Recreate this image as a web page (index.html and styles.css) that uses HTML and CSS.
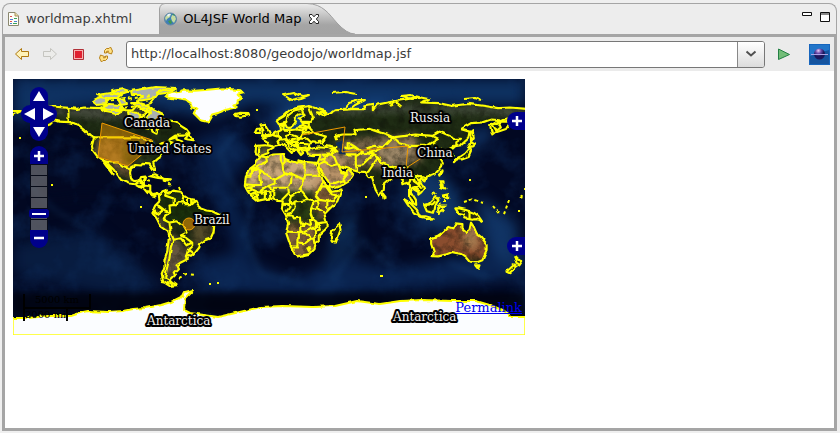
FILE: index.html
```html
<!DOCTYPE html>
<html lang="en">
<head>
<meta charset="utf-8">
<title>OL4JSF World Map</title>
<link rel="stylesheet" href="styles.css">
</head>
<body>
<main class="window">
  <header class="tabbar">
    <div class="tab">
      <svg class="icon" width="16" height="16" viewBox="0 0 16 16" aria-hidden="true">
        <path d="M2.500 1.500H9L12.500 5V14.500H2.500Z" fill="#fffef8" stroke="#8b8870"/>
        <path d="M9 1.500V5H12.500" fill="#eadca8" stroke="#a8925a"/>
        <path d="M4 5.500h2M4 10.500h2" stroke="#e05050"/>
        <path d="M4 8.500h3M8 10.500h3M4 12.500h2" stroke="#4c7fd0"/>
        <path d="M8 7.500h3M7 12.500h4" stroke="#3da55c"/>
      </svg>
      <a href="#source">worldmap.xhtml</a>
    </div>
    <div class="tab tab-active">
      <svg class="tab-shape" width="196" height="31" viewBox="0 0 196 31" aria-hidden="true">
        <defs><linearGradient id="tabfill" x1="0" y1="0" x2="0" y2="1"><stop offset="0" stop-color="#ececec"/><stop offset=".7" stop-color="#a5a5a5"/><stop offset="1" stop-color="#a3a3a3"/></linearGradient></defs>
        <path d="M.5 31V6Q1 1 6 .5H148C164 1 170 11 178 20Q188 31 196 31Z" fill="url(#tabfill)"/>
        <path d="M.5 31V6Q1 1 6 .5H148C164 1 170 11 178 20Q188 31 196 31" fill="none" stroke="#a0a0a0"/>
      </svg>
      <svg class="icon" width="16" height="16" viewBox="0 0 16 16" aria-hidden="true">
        <circle cx="7.500" cy="8" r="6" fill="#3d7eb8" stroke="#6287a5"/>
        <path d="M3 5Q6 2 8 3L7 6L4 8L3 10L2 7ZM9 4L12 5L13 8L11 12L9 10L8 7Z" fill="#c6dca0"/>
        <path d="M5 10L8 9L9 12L7 13ZM9 3L11 3L12 5Z" fill="#3f984d"/>
        <path d="M4 4Q6 2 8 3L5 6Z" fill="#e8f3fc"/>
      </svg>
      <a href="#map" aria-current="page">OL4JSF World Map</a>
      <button class="close" aria-label="Close tab"><svg width="12" height="12" viewBox="0 0 12 12"><path d="M1.500 1.500H4L6 3.800L8 1.500H10.500V3.500L8.300 6L10.500 8.500V10.500H8L6 8.200L4 10.500H1.500V8.500L3.700 6L1.500 3.500Z" fill="#fff" stroke="#222"/></svg></button>
    </div>
    <div class="winctl">
      <button aria-label="Minimize"><svg width="11" height="11" viewBox="0 0 11 11"><path d="M.5 1.500h9v3h-9z" fill="#fff" stroke="#111"/></svg></button>
      <button aria-label="Maximize"><svg width="11" height="11" viewBox="0 0 11 11"><path d="M.5 1.500h9v9h-9zM.5 3h9" fill="#fff" stroke="#111"/></svg></button>
    </div>
  </header>

  <section class="browser">
    <form class="toolbar">
      <button type="button" aria-label="Back"><svg width="16" height="16" viewBox="0 0 16 16"><path d="M1.500 8L7.500 2.500V5.500H14.500V10.500H7.500V13.500Z" fill="#fff3b8" stroke="#b07a10" stroke-linejoin="round"/></svg></button>
      <button type="button" aria-label="Forward" disabled><svg width="16" height="16" viewBox="0 0 16 16"><path d="M14.500 8L8.500 2.500V5.500H1.500V10.500H8.500V13.500Z" fill="#ececea" stroke="#c5c5c0" stroke-linejoin="round"/></svg></button>
      <button type="button" aria-label="Stop"><svg width="16" height="16" viewBox="0 0 16 16"><path d="M3.500 3.500h10v10h-10z" fill="#f8b0b0" stroke="#b03038"/><path d="M5 5h7v7H5z" fill="#e02030"/></svg></button>
      <button type="button" aria-label="Refresh"><svg width="16" height="16" viewBox="0 0 16 16"><g fill="#ffe184" stroke="#b88218" stroke-linejoin="round"><path id="turn" d="M6.500 7V4.500L8.500 2.500H11L12.500 1L14.500 5L13.500 8L9.500 6.500L10.500 5L8.500 5.500V7Z"/><use href="#turn" transform="rotate(180 8 8.500)"/></g></svg></button>
      <div class="combo">
        <input type="text" aria-label="Address" value="http://localhost:8080/geodojo/worldmap.jsf">
        <button type="button" aria-label="Show history"><svg width="12" height="8" viewBox="0 0 12 8"><path d="M1.500 1.500L6 5.500L10.500 1.500" fill="none" stroke="#505050" stroke-width="2"/></svg></button>
      </div>
      <button class="go" aria-label="Go"><svg width="14" height="14" viewBox="0 0 14 14"><path d="M1.500 2L12.500 7.500L1.500 12.500Z" fill="#72bd78" stroke="#238044"/></svg></button>
      <button type="button" class="eclipse" aria-label="Open in external browser"><svg width="21" height="21" viewBox="0 0 21 21"><defs><radialGradient id="orb" cx=".4" cy=".2"><stop offset="0" stop-color="#e5cdf5"/><stop offset=".5" stop-color="#6d4cab"/><stop offset="1" stop-color="#1c165c"/></radialGradient></defs><path d="M0 0H21V21H0Z" fill="#1765bd"/><path d="M1 1H20V20H1Z" fill="#2275c9"/><path d="M1 20V12L20 6V20Z" fill="#15549f"/><circle cx="10.500" cy="10" r="5.500" fill="url(#orb)"/><path d="M2 10.500H19" stroke="#aaa0e4"/></svg></button>
    </form>

    <div class="page">
      <div class="map" id="map">
        <svg class="world" viewBox="0 0 512 256" role="img" aria-label="World map with country borders">
          <defs>
            <path id="land" transform="translate(256 128) scale(1.4222 -1.4222)" d="M-141 69.700L-150 70.500L-157 71.300L-163 69L-166 68.300L-162 66.500L-168 65.700L-161 64.500L-165 62L-162 59L-157 58.800L-162 55.200L-154 58L-151 61L-148 60L-140 59.700L-135 58L-130 54L-127 51L-123 49L-124.500 43L-124 40L-121 36L-118 34L-117 32.500L-114.500 29L-110 23L-112 28L-114.500 31.500L-112 29L-109 26L-105.500 21L-104 19L-98 16.500L-94.500 16L-92 14.500L-88 13L-85.500 10L-83 8.500L-80 7.500L-79 9L-77.500 8L-79 9.500L-82 9L-83.500 11L-83.500 15L-88 15.800L-88 18L-87 21.400L-90 21L-91 18.800L-94 18.200L-97 20L-97.700 24L-97 28L-94 29.500L-90 29.200L-89 30.300L-84 30L-82.700 28L-81 25.200L-80.200 26.500L-81.300 31L-78 34L-75.700 35.500L-76 37.500L-74 40L-70 42L-70 44L-67 45L-64 44L-61 46L-65 47.500L-65 49L-70 47.500L-66 50.200L-60 50.200L-56 52L-58 54.500L-62 57L-65 60L-70 61L-73 62L-78 62.400L-77.500 60L-78.500 58.500L-76.700 57L-79 54.500L-79 51.500L-82 53L-82.500 55.200L-88 56.500L-92.700 58L-94.500 60L-91 63L-87 64.500L-86 67L-82 69L-85 69.800L-90 69L-93 71.500L-96 68L-102 68L-108 68.300L-115 68.300L-115 69.500L-123 69.700L-130 70L-135 69Z
            M-77.500 8L-75 11L-72 12L-71 9.500L-68 11.500L-62 10.700L-60 8L-57 6L-52 5L-50 1L-48 -1L-44 -2.500L-40 -3L-35 -5.500L-35 -8.500L-38.500 -13L-39 -17.500L-41 -22L-45 -23.300L-48.500 -26L-49 -28.500L-53 -33.500L-55 -35L-58 -34L-57 -36.500L-62 -39L-65 -41L-64 -43L-67 -46L-66 -48L-69 -51L-68.500 -52.500L-65 -55L-70 -55.500L-74.500 -52.500L-75.500 -47L-73.500 -42L-73.500 -37L-71.500 -31L-70.200 -20L-71 -17.500L-76 -14L-79 -8L-81.300 -5L-80 -3L-81 -1L-80 1L-77 4Z
            M-6 35.800L-2 35L3 36.900L10 37.300L11 34L15 32.300L20 31L20 32.800L25 31.700L31 31.300L34 31L32.500 29.800L35 25L37 21L38 18L43 12L44 10.500L51 11.800L48 4L42 -2L39 -5L40.500 -11L40.500 -15L35 -20L35 -24L32.700 -26L32 -29L28 -33L20 -34.700L18 -33L15 -27L12 -18L13.500 -12L12 -6L9 -1L9.700 4L6 4.300L1 6L-5 5L-8 4.300L-13 8.500L-15 11L-17 14.700L-16.500 20L-14.500 26L-10 29.500L-9.500 32Z
            M-9.500 38.700L-9 43L-2 43.500L-1.300 46L-4.500 48.300L1.500 50.200L4 52L8.500 54L8 57L10.500 57.500L10 54.500L14 54L19 54.500L21 57L24 57.500L23.500 59.200L29.500 59.800L23 60L21.500 61.500L25.500 65L22 65.800L17.500 62L19 60L16.500 57L14 55.500L12.500 56L11 59L7 58L5 61L10 64L15 68.500L21 70L28 71L33 69.500L41 67L40 66.200L33 66.500L38 64L40 65L44 66.500L46 68L54 68.500L60 69L68 68.800L67 71.500L73 72.500L73 68L76 72L86 74L98 76L104 77.500L113 75.800L107 73.500L120 73L129 71L132 71.500L140 72.500L152 71L161 69.500L170 70L181 69L181 65L177 64.500L179 62.500L170 60L163 60L162 58L163 56L157 51L155.500 57L162 61L156 61.500L150 59.500L142 59L135 54.700L141 53L140 48L135 43.500L131 42.700L127.500 39.500L129.300 36L126.500 34.500L126.500 37.500L125 39.500L121.500 39L122 40.500L118 39L122.300 37L119.300 35L121.500 31.500L121 28L117 23.500L110 21L108 21.500L106 19L109 13L107 10.300L105 8.700L105 10.500L101 13L99.500 11L103.300 5L103.500 1.500L101 3L98.500 8L98.500 15L97 17L94.500 16L94 19L91 22.500L87 21.500L85 19.500L80.300 15.500L80 12L77.500 8L75 12L72.800 19L72.500 21L70 21L67 24.700L62 25L57 26.500L51 28.500L48.500 30L50 27L51.500 25L54 24L56.300 26L59.800 22.500L57.500 19L52 15.500L45 13L43 14L42 17.500L39 21.500L35 28L35 30L34.300 31.300L36 35.500L36 36.700L30.500 36.500L27.500 37L26.500 39.500L29.500 41L35 42L41.300 41.500L37.500 44.700L39 47L35 46.300L36 45L33.500 44.500L32.500 46L30.500 46.200L28.500 43.700L28 41.700L26 40.800L23 40.300L24 38L22.500 36.500L21 38.500L19.500 40.500L19.400 42L14 45L12.300 45.300L14 42.500L18.400 40.100L16.500 39L16 38L12 42L9 44.400L5 43.300L3.200 43L3.200 41.800L0 40L-.5 38L-5.500 36.100L-9 37Z
            M114 -22L114 -26L116 -32L115 -34.500L119 -34.700L124 -33.500L129 -31.700L135 -33L138 -35L141 -38.500L146 -39L150 -37.500L153 -31L153 -26L149 -21L146 -18.500L144 -14L142 -11L141 -16L139 -17.500L136 -15L136 -12L131 -11.500L129 -15L126 -14L122 -18L119 -20ZM145 -41L148 -41L147 -43.500Z
            M49.300 -12L50.300 -16L47 -25L44 -24L43.500 -21.500L44.500 -16.500Z
            M-5 50L1 51L0 53L-2 56L-3 58.500L-6 58L-4 54L-4 52ZM-10 52L-6 52L-6 55L-8.500 55ZM-24 65.500L-20 66.300L-14.500 66L-14 64.700L-20 63.500L-23 64Z
            M130 31.500L132 33.500L136 33.500L140 35L142 39.500L141 41L138 37.500L135 35.500L131 34.200ZM140 42L144 43L145 44L142 45.500ZM142 46L144 49L143 54L142 53ZM120.500 22L122 25L120 24Z
            M131 -1L134 -1L138 -2L144 -4L147 -6L150 -10.500L146 -8.500L143 -9L138 -8L137 -5L133 -4Z
            M109 1.500L112 2L117 7L119 5L117 1L116 -4L111 -3ZM95 5.500L99 3L104 -2L106 -6L102 -4L98 1ZM105.500 -6.500L110 -6.500L115 -8L110 -8.500L106 -7.500ZM119 1L124 1L121 0L123 -3L121 -2L120 -5L119 -3ZM120 18L122 18L122 15L124 13L121 14ZM122 8L126 9L126 6L123 7ZM80 9.500L82 7L80.500 6ZM108.500 19.500L111 20L110 18Z
            M172.500 -34.500L175 -37L178 -38L176 -41L174 -40ZM172 -41L174 -42L169 -46.500L167 -45.500Z
            M-85 22L-80 23L-74.500 20L-78 20.500ZM-74 19.800L-69 19.500L-71 18L-74 18.500ZM-59 48L-56 51.500L-53 47L-57 47.500Z"/>
            <path id="ice" transform="translate(256 128) scale(1.4222 -1.4222)" d="M-73 78.200L-69 80L-63 81L-60 82L-52 81.700L-45 82.300L-32 83.500L-20 82L-18 80L-22 79L-19 76L-22 75L-22 73L-25 72L-22 70.300L-30 68.500L-36 66L-40 65L-43 60L-48 61L-51 64L-53 66L-51 69L-54 70L-55 73L-58 75L-65 76L-71 77Z"/>
            <path id="arctic" d="M79 22L87 18L97 20L92 25L84 26ZM87 29L96 25L107 26L112 31L104 35L93 33ZM84 16L97 14L108 16L104 19L92 19ZM105 20L112 19L114 25L108 26ZM99 12L110 10L116 12L107 15ZM118 12L142 8L164 9L158 13L145 15L138 20L124 22L130 16L119 16ZM118 24L127 24L136 27L142 32L150 36L145 40L139 43L134 39L137 34L130 31L124 28ZM116 33L125 34L129 39L122 42L117 38Z"/>
            <clipPath id="landclip"><use href="#land"/></clipPath>
            <clipPath id="mapclip"><rect width="512" height="256"/></clipPath>
            <filter id="soft" x="-30%" y="-30%" width="160%" height="160%" color-interpolation-filters="sRGB"><feGaussianBlur stdDeviation="7"/></filter>
            <filter id="haze" x="-30%" y="-30%" width="160%" height="160%" color-interpolation-filters="sRGB"><feGaussianBlur stdDeviation="3"/></filter>
            <filter id="sea" x="0" y="0" width="100%" height="100%" color-interpolation-filters="sRGB"><feTurbulence type="fractalNoise" baseFrequency=".03" numOctaves="5" seed="8"/><feColorMatrix values="0 0 0 0 .06  0 0 0 0 .19  0 0 0 0 .38  2.600 0 0 0 -1.150"/></filter>
            <filter id="soil" x="0" y="0" width="100%" height="100%" color-interpolation-filters="sRGB"><feTurbulence type="fractalNoise" baseFrequency=".12" numOctaves="4" seed="3"/><feColorMatrix values="0 0 0 0 .05  0 0 0 0 .06  0 0 0 0 .03  2.400 0 0 0 -.95"/></filter>
            <filter id="coast" filterUnits="userSpaceOnUse" x="-8" y="-8" width="528" height="272" color-interpolation-filters="sRGB"><feTurbulence type="fractalNoise" baseFrequency=".16" numOctaves="1" seed="5" result="n"/><feDisplacementMap in="SourceGraphic" in2="n" scale="4" xChannelSelector="R" yChannelSelector="G"/></filter>
          </defs>
          <g clip-path="url(#mapclip)">
            <rect width="512" height="256" fill="#020822"/>
            <g filter="url(#soft)">
              <path d="M0 0H512V26H440L300 34L240 24L200 40L120 24L60 28L0 44Z" fill="#0e3262"/>
              <path d="M255 36L300 26L390 22L350 46L270 60Z" fill="#164887"/>
              <path d="M180 60L220 48L240 75L215 105L235 145L245 215L230 210L215 150L190 95Z" fill="#08204a"/>
              <path d="M0 165L80 150L155 210L90 215L0 195Z" fill="#081c40"/>
              <path d="M175 185L215 175L280 200L330 180L380 190L512 165V200L300 218L190 212Z" fill="#0a2450"/>
              <path d="M400 78L440 105L455 140L430 155L390 130Z" fill="#103666"/>
              <path d="M336 120L345 170L310 190L325 140Z" fill="#0b264c"/>
              <path d="M450 60L475 45L480 60L450 75ZM462 115L505 145L500 190L475 170Z" fill="#113566"/>
              <path d="M80 65L105 90L120 120L70 115L30 120L20 75Z" fill="#020822"/>
            </g>
            <rect width="512" height="256" filter="url(#sea)" opacity=".5"/>
            <path d="M0 214H512V235H0Z" fill="#010410" filter="url(#haze)" opacity=".85"/>
            <g filter="url(#haze)" fill="none" stroke="#28649c" stroke-width="2" opacity=".4">
              <path d="M220 55L207 75L218 102L239 127L230 155L248 195L290 204"/>
              <path d="M316 165L338 148L344 132M320 200L350 160L380 190M435 183L477 200M12 100L40 130L74 150"/>
            </g>
            <g filter="url(#coast)">
              <g clip-path="url(#landclip)">
                <rect width="512" height="256" fill="#1f2c14"/>
                <g filter="url(#haze)">
                  <path d="M85 60L112 58L118 82L125 102L102 90L82 75Z" fill="#7d6040"/>
                  <path d="M110 62L145 58L135 90L110 86Z" fill="#2f3c1d"/>
                  <path d="M20 30L125 22L165 35L150 41L80 40Z" fill="#44493c"/>
                  <path d="M233 74L318 72L325 113L232 108Z" fill="#c8a67c"/>
                  <path d="M298 72L350 74L340 105L305 110Z" fill="#b89268"/>
                  <path d="M325 62L402 55L410 82L370 90L328 82Z" fill="#857050"/>
                  <path d="M365 68L400 66L398 84L370 82Z" fill="#a08a6a"/>
                  <path d="M232 111H330V142H245Z" fill="#293d14"/>
                  <path d="M302 107L330 112L310 142L300 130Z" fill="#795734"/>
                  <path d="M270 145L305 143L305 180L275 182Z" fill="#80603b"/>
                  <path d="M145 115L200 120L195 141L155 145Z" fill="#1a300c"/>
                  <path d="M152 145L168 165L182 175L160 210L148 190L140 128Z" fill="#645640"/>
                  <path d="M178 142L202 140L205 155L180 168Z" fill="#544b2a"/>
                  <path d="M410 140H482V180H410Z" fill="#8a4d2e"/>
                  <path d="M450 145L465 148L466 170L450 168Z" fill="#a4794e"/>
                  <path d="M280 24L512 28V38L420 33L300 36Z" fill="#424b3b"/>
                  <path d="M245 70L260 68L260 80L244 80Z" fill="#665e40"/>
                </g>
                <rect width="512" height="256" filter="url(#soil)" opacity=".45"/>
              </g>
              <path transform="translate(256 128) scale(1.4222 -1.4222)" d="M47 45L51 47L53 45L51 43L53 40L54 37L49 37.500L50 40L47.500 43ZM-92 47L-85 48L-80 45L-83 43L-84 46L-87 42L-87 46Z" fill="#102e58"/>
              <use href="#ice" fill="#fcfdff"/>
              <use href="#arctic" fill="#a9b0ae"/>
              <path d="M0 239L15 239L35 237L58 237L70 233L75 232L95 233L110 232L120 230L132 229L148 226L158 223L170 217L172 213L180 211L172 219L171 231L177 234L205 238L231 232L248 228L270 227L300 228L322 227L344 222L367 225L387 222L410 221L440 222L463 222L480 227L495 234L497 238L518 238V262H-6V239Z" fill="#fbfdff"/>

              <g class="borders">
                <use class="shore" href="#land"/><use class="shore" href="#ice"/><use href="#arctic"/>
                <path class="shore" transform="translate(256 128) scale(1.4222 -1.4222)" d="M-141 69.700V60L-135 58M-123 49H-95L-89 48L-83 46L-82 43L-79 43L-75 45L-70 46L-67 45M-117 32.500L-111 31.300L-106 31.500L-103 29L-100 28L-97.500 26M-94 16L-90.500 18L-89 18M-91 17H-89V15L-84 15M-92 14.500L-88 14.500L-87.500 13M-86 11L-83.500 11M-83 9L-82 9
                M-72 12L-73 8L-67 6L-67 1.500L-70 1L-69.500 -4L-73 -2.500L-77 .5L-79 1.500M-78 0L-75 -2L-79 -5L-81 -3.500M-69.500 -4L-73 -6L-74 -9L-70 -11L-69 -18L-70 -18M-70 -11L-65 -10L-60 -14L-58 -18L-62 -20L-58 -22L-54 -25L-58 -27L-62 -22L-67 -23L-69 -18M-60 8L-61 4L-64 4L-65 1L-67 1.500M-57 6L-57 2L-54 2L-54 5M-52 4L-54 2L-60 2L-61 4M-54 -25L-54 -27L-57 -30L-58 -34M-57 -30L-53 -33M-67 -23L-69 -28L-70 -36L-72 -44L-73 -50L-69 -52L-68 -55
                M-2 35L-1.500 32L-8.700 28.700V27.300H-13M-8.700 27.300V26H-12V23.300H-13V21.300H-17M-8.700 27.300L-4.800 25H-6.500L-5.500 15.500H-11.500L-16.500 16M-4.800 25L1.500 21L4.200 19.200L12 23.500L9.900 26L9.500 30.300L8.300 33V37M9.500 30.300L11.500 33M12 23.500L14.500 22.900L16 23.400L24 19.500V20H25V31.700M25 22H37M24 19.500V15.700L22 13L23 11M16 23.400L15.500 17L13.500 13.700L4 13.500L3.600 11.700L0 15L4 16.500V19.200M0 15L-5 11.500L-5.500 10L2.500 11.300L3.600 11.700M-11.500 15.300V12.300L-8 10.500L-5.500 10M-8 10.500L-8.500 7.500L-7.500 4.400M-2.800 10.500L-3 5M0 11L1 6M3 11.500V6.300M-15 11L-11.500 12.300M-13 8.800L-10.500 10L-8.500 7.500L-11.500 7M-16 14H-12M13.500 13.700L14 10L9 5M14 10L15.500 7.500L14.500 4.500L16 2L9.800 2.300M15.500 7.500L18.500 9L22.800 11L27.500 5L22.500 4.200L18.500 4L16 2M27.500 5L31 3.700M18 4V-.5L16 -4L12.500 -5M13 2.300L14.500 0L12 -3.500M12.500 -6H16.500L17.500 -8L21.800 -7.500L22 -11H24V-13H22V-16.500L23.500 -17.700L12 -17.400M24 -11L28.500 -12.500L29.800 -13.300L28.700 -8.500L30.700 -8.300L29.300 -4.500L29.600 -1.200L31 2.300V3.700L35.500 5L33 8L34 10L36.500 14.500L38 18M36.500 14.500H40L42.500 11L44 9L48 8L45 5L41.500 4L35.500 5M41 4V-1.500M30 -1H34L37.500 -3L39.200 -4.700M34 -1L35 2L34 4.500M30.700 -8.300L34.500 -11.500L40.500 -10.500M33 -9.500V-14L30.300 -15L33 -16.500L35.800 -16L34.500 -11.500M23.500 -17.700L25.200 -17.800L28.900 -15.700L30.300 -15M33 -16.500V-20L31.300 -22.300L29.400 -22.200L27.500 -20.500L25.200 -17.800M21 -18V-22H20V-28.500H16.500M20 -25L25.500 -25.500L29.400 -22.200M31.300 -22.300L32 -26M27 -29L29 -29L28 -31Z
                M-7 42V37.500M-2 43.500L3 42.500M2 51L8 49L7.500 47.500L6 46L7.500 43.800M6 53.500L6 50L8 49M14 54L15 51L12 50L13 48L10 47.500L7 47.500M15 51L19 49.500L23 49L24 52L23 54L19 54.500M17 48L22 48L24 52M10 47L13.500 46.500L17 48L16 46L19 46L22 48L27 48L29.500 45.500M13.500 46L16.500 45L19 45L19 42.500M19 46L21 44.500L28 44M21 44.500L20 42L23 41.500L26.500 42M20 42L21 40L23 41M23.500 59L28 59L28 56L24 57.500M28 56L31 53L24 52M31 53L35 51L40 49.500L38 47M29 60L31 63L29 68L28 71M24 66L23 69L18 68L13 64L12 59M27 57L26 54L22 54M28 56L26 55.500L21 56M40 43.500L48 42M42 41L46 41L48 39L45 40L44 37L37 36.700M44 37L46 35L48 30M42 37L39 34L36 33M39 34L39 32L35 30M39 32L44 29L48 30M43 17L47 17L52 19L55 23L51 24M52 19L53 16M54 37L61 37L61 30L62 25M61 35L66 38L74 37L70 34L66 30L61 29.500M74 37L77 35L74 31L70 25L68 24M53 42L56 41L60 42L66 38M66 38L61 42L56 45L56 41M68 41L74 43L80 42L74 39L68 38M48 47L47 50L51 51L61 51L60 54L71 55L77 53L83 51L87 49L80 42M87 49L96 50L103 51L115 50L119 48L111 43L98 43L91 45L87 49M115 50L120 53L127 50L131 48L135 48L131 45L131 42.700M125 40L130 42.500M126.500 38L128.500 38.500M77 35L79 31L88 28L97 28L98 24L102 22L108 21.500M81 30L88 27M88 28L92 27L89 26L88 22L91 24L92 22M97 28L93 24L92 22M98 24L100 20L98 16L99 11M100 20L102 22L106 18L105 14L102 14L106 11M101 20L102 18L105 16L107 13M110 1.500L115 2L117 4M141 -2.500V-9"/>
                <path d="M-6 239H15L35 237L58 237L70 233L75 232L95 233L110 232L120 230L132 229L148 226L158 223L170 217L172 213L180 211L172 219L171 231L177 234L205 238L231 232L248 228L270 227L300 228L322 227L344 222L367 225L387 222L410 221L440 222L463 222L480 227L495 234L497 238L518 238M0 32H8L0 36"/>
                <path d="M143 14L150 11L160 11M145 15L138 24L129 27M271 16L281 14L290 17L296 16L288 19L278 21ZM331 30L336 24L347 21L352 21L342 26L337 30ZM388 17L398 16L407 19L399 20ZM451 20L462 19L468 21M377 26L382 22L389 28M319 14L332 13L343 15M480 46L490 41L499 40L493 50L484 53Z"/>
                <path d="M420 114L425 119L428 125M404 96L410 101L403 106M431 120V127M451 123L460 120L470 124M480 127L487 136M496 121L490 138M507 119L512 116M134 101L138 102M155 105L160 106M166 108L169 116M166 199L173 195L181 196M148 203L160 205M92 22L140 17M100 30L135 26" stroke-dasharray="3 3"/>
              </g>
            </g>
            <g class="borders">
              <path d="M38 106h2M25 47h2M6 59h2M127 128h2M367 197h3M352 118h2M505 132h2M511 110h2M246 51h2M243 31h2M456 101h2M196 205h2M204 204h2"/>
              <path class="edge" d="M0 255.500H512M511.500 238V256M.5 239V256"/>
            </g>
            <path d="M89 44L139 61L138 68L115 87L85 78Z" fill="#ee9900" fill-opacity=".48" stroke="#ee9900"/>
            <path d="M289 56L332 48L329 73L395 67L393 89L410 78" fill="none" stroke="#ee9900"/>
            <circle cx="176" cy="145" r="6" fill="#ee9900" fill-opacity=".55" stroke="#ee9900"/>
            <g class="labels">
              <text x="111" y="48">Canada</text><text x="115" y="74">United States</text>
              <text x="397" y="43">Russia</text><text x="404" y="78">China</text><text x="369" y="98">India</text>
              <text x="181" y="145">Brazil</text><text x="134" y="246">Antarctica</text><text x="380" y="242">Antarctica</text>
            </g>
          </g>
        </svg>
        <div class="pan">
          <button class="up" aria-label="Pan up"><svg width="18" height="18" viewBox="0 0 18 18"><path d="M9 4L15 14H3Z" fill="#fff"/></svg></button>
          <button class="left" aria-label="Pan left"><svg width="18" height="18" viewBox="0 0 18 18"><path d="M3 9L14 3V15Z" fill="#fff"/></svg></button>
          <button class="right" aria-label="Pan right"><svg width="18" height="18" viewBox="0 0 18 18"><path d="M15 9L4 3V15Z" fill="#fff"/></svg></button>
          <button class="down" aria-label="Pan down"><svg width="18" height="18" viewBox="0 0 18 18"><path d="M9 14L15 4H3Z" fill="#fff"/></svg></button>
        </div>
        <div class="zoom">
          <button class="in" aria-label="Zoom in"><svg width="18" height="18" viewBox="0 0 18 18"><path d="M4 10H14M9 5V15" stroke="#fff" stroke-width="2.500"/></svg></button>
          <div class="track"><i></i><i></i><i></i><i></i><i></i><i></i><button class="handle" aria-label="Zoom level"></button></div>
          <button class="out" aria-label="Zoom out"><svg width="18" height="18" viewBox="0 0 18 18"><path d="M4 8H14" stroke="#fff" stroke-width="2.500"/></svg></button>
        </div>
        <button class="expand layers" aria-label="Show layers"><svg width="18" height="18" viewBox="0 0 18 18"><path d="M5 9H15M10 4V14" stroke="#fff" stroke-width="2.500"/></svg></button>
        <button class="expand overview" aria-label="Show overview map"><svg width="18" height="18" viewBox="0 0 18 18"><path d="M5 9H15M10 4V14" stroke="#fff" stroke-width="2.500"/></svg></button>
        <div class="scale"><div class="km">5000 km</div><div class="mi">2000 mi</div></div>
        <a class="permalink" href="#permalink">Permalink</a>
      </div>
    </div>
  </section>
</main>
</body>
</html>
```
FILE: styles.css
```css
* { box-sizing: border-box; }
body {
  margin: 0;
  background: #efefef;
  color: #3c3c3c;
  font: 13px/18px "DejaVu Sans", sans-serif;
}
button { padding: 0; border: 0; background: none; display: grid; place-items: center; }
svg { display: block; }
.window { min-height: 100vh; padding: 3px 3px 2px 2px; display: flex; flex-direction: column; }
.tabbar {
  height: 31px;
  display: flex;
  border: 1px solid #a5a5a5;
  border-bottom: 0;
  border-radius: 8px 8px 0 0;
  background: #ededed;
}
.tab { position: relative; display: flex; align-items: center; gap: 4px; padding: 0 27px 0 3px; }
.tab a { position: relative; color: inherit; text-decoration: none; white-space: nowrap; }
.tab .icon { position: relative; }
.tab-active { color: #000; padding: 0 0 0 4px; }
.tab-shape { position: absolute; left: 0; top: -1px; }
.close { position: relative; margin-left: 3px; }
.winctl { margin-left: auto; padding: 7px 5px 0 0; display: flex; gap: 7px; align-items: flex-start; }
.browser { flex: 1; border: 3px solid #a5a5a5; background: #fff; }
.toolbar { height: 34px; background: #ebebeb; display: flex; align-items: center; gap: 12px; padding: 0 4px 0 9px; }
.combo {
  flex: 1;
  height: 27px;
  display: flex;
  border: 1px solid #777;
  border-radius: 3px;
  background: #fff;
  overflow: hidden;
}
.combo input { flex: 1; min-width: 0; border: 0; outline: 0; padding: 0 4px; background: none; font: inherit; color: #3c3c3c; }
.combo button { width: 27px; border-left: 1px solid #888; background: linear-gradient(#fff, #dcdcdc); }
.go { margin-right: 6px; }
.page { padding: 8px; }

.map { position: relative; width: 512px; font-family: "DejaVu Serif", serif; }
.world { width: 100%; }
.borders { fill: none; stroke: #ff0; stroke-width: 2; stroke-linejoin: round; }
.borders .shore { stroke-width: 1.5; }
.borders .edge { stroke-width: 1; opacity: .7; }
.labels { font-size: 12px; fill: #f2f2f2; stroke: #000; stroke-width: 4px; stroke-linejoin: round; paint-order: stroke; }
.map button { background: #00008b; }
.pan button { position: absolute; width: 18px; height: 18px; }
.pan .up { left: 17px; top: 8px; border-radius: 9px 9px 0 0; }
.pan .left { left: 8px; top: 26px; border-radius: 9px 0 0 9px; }
.pan .right { left: 26px; top: 26px; border-radius: 0 9px 9px 0; }
.pan .down { left: 17px; top: 44px; border-radius: 0 0 9px 9px; }
.zoom { position: absolute; left: 17px; top: 67px; width: 18px; }
.zoom .in { border-radius: 9px 9px 0 0; }
.zoom .out { border-radius: 0 0 9px 9px; }
.track { position: relative; }
.track i { display: block; height: 11px; border: 1px solid #070b18; border-bottom: 0; background: rgba(105, 105, 110, .75); }
.track .handle { position: absolute; left: -1px; top: 45px; width: 20px; height: 9px; border-radius: 3px; }
.handle::after { content: ""; width: 14px; height: 2px; background: #fff; }
.expand { position: absolute; right: 0; border-radius: 9px 0 0 9px; }
.layers { top: 33px; }
.overview { top: 158px; }
.scale { position: absolute; left: 10px; bottom: 14px; font-size: 10px; line-height: 12px; color: #000; text-align: center; }
.km { width: 68px; height: 15px; border: solid #000; border-width: 0 2px 2px; }
.mi { width: 45px; height: 12px; border: solid #000; border-width: 0 2px; white-space: nowrap; }
.permalink { position: absolute; right: 3px; bottom: 19px; font-size: 13px; line-height: 16px; color: #0000ee; }
```
